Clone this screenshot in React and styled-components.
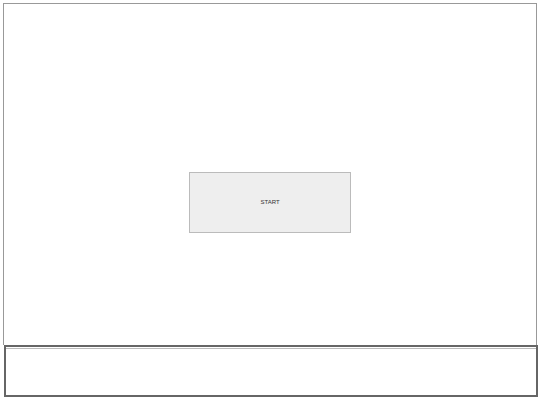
import React from "react";
import styled, { createGlobalStyle } from "styled-components";

const GlobalStyle = createGlobalStyle`
  html, body {
    margin: 0;
    padding: 0;
    background: #fff;
    font-family: "Liberation Sans", Arial, sans-serif;
  }
`;

export default function App() {
  return (
    <>
      <GlobalStyle />
      <Page>
        <Stage>
          <StartButton>START</StartButton>
        </Stage>
        <Console>
          <ConsoleLog />
        </Console>
      </Page>
    </>
  );
}

const Page = styled.div`
  display: flex;
  flex-direction: column;
  width: 540px;
  height: 405px;
  padding-top: 3px;
  box-sizing: border-box;
`;

const Stage = styled.div`
  margin-left: 3px;
  width: 534px;
  height: 342px;
  box-sizing: border-box;
  border: 1px solid #999;
  border-bottom: none;
  display: flex;
  align-items: center;
  justify-content: center;
`;

const StartButton = styled.button`
  width: 162px;
  height: 61px;
  margin-top: 55px;
  background: #eeeeee;
  border: 1px solid #bbbbbb;
  border-radius: 0;
  font-family: "Liberation Sans", Arial, sans-serif;
  font-size: 6px;
  color: #333;
  padding: 0;
  cursor: pointer;
`;

const Console = styled.div`
  margin-left: 4px;
  width: 534px;
  height: 52px;
  box-sizing: border-box;
  border: 2px solid #666;
  display: flex;
  flex-direction: column;
`;

const ConsoleLog = styled.div`
  margin-top: 1px;
  border-top: 1px solid #bbb;
  flex: 1;
`;
